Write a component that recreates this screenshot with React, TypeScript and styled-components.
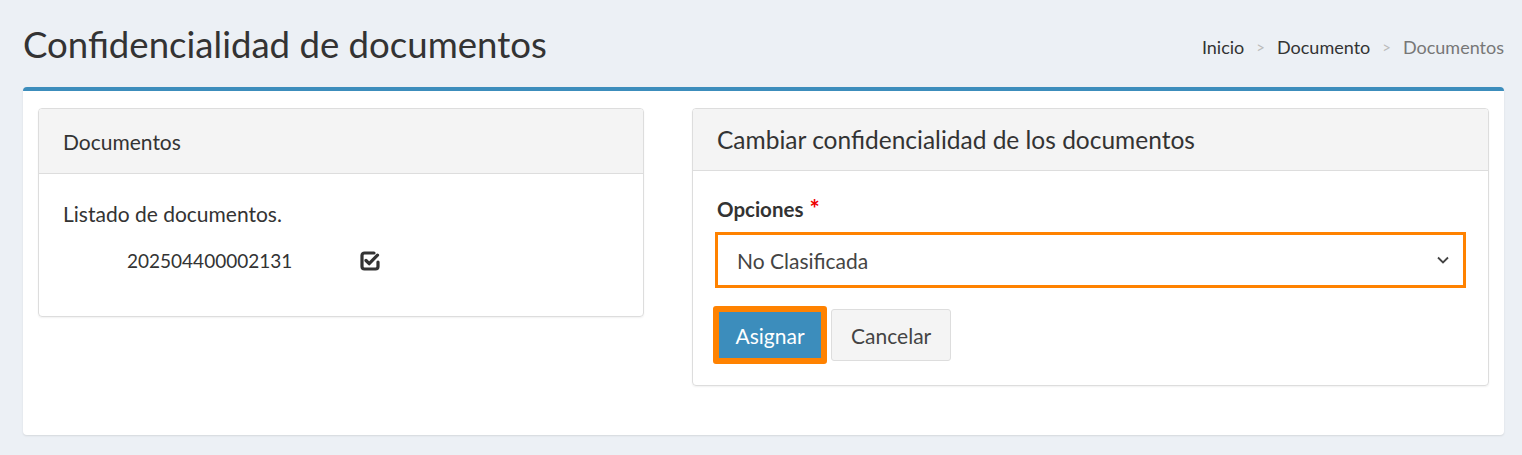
import styled, { createGlobalStyle } from "styled-components";

const GlobalStyle = createGlobalStyle`
  body {
    margin: 0;
    background: #ecf0f5;
    font-family: Lato, "Noto Sans", sans-serif;
    color: #333;
  }
`;

const Page = styled.div`
  padding: 0 18px 20px 23px;
`;

const Header = styled.div`
  height: 87px;
  display: flex;
  align-items: center;
  justify-content: space-between;
`;

const Title = styled.h1`
  margin: 0;
  font-size: 36.6px;
  font-weight: 400;
  color: #333;
`;

const Breadcrumb = styled.ol`
  display: flex;
  align-items: center;
  gap: 12px;
  margin: 6px 0 0;
  padding: 0;
  list-style: none;
  font-size: 18px;
`;

const Crumb = styled.li<{ $active?: boolean }>`
  color: ${(p) => (p.$active ? "#777" : "#333")};
`;

const Sep = styled.li`
  color: #bbb;
  font-size: 15px;
`;

const Box = styled.div`
  background: #fff;
  border-top: 4px solid #3c8dbc;
  border-radius: 4px;
  box-shadow: 0 1px 2px rgba(0, 0, 0, 0.1);
  padding: 17px 15px 49px;
  display: grid;
  grid-template-columns: 606px 1fr;
  gap: 48px;
  align-items: start;
`;

const Card = styled.div`
  border: 1px solid #ddd;
  border-radius: 4px;
  box-shadow: 0 1px 2px rgba(0, 0, 0, 0.06);
  overflow: hidden;
`;

const CardHeader = styled.div<{ $height: number; $size: number }>`
  height: ${(p) => p.$height}px;
  display: flex;
  align-items: center;
  padding: 0 24px;
  background: #f4f4f4;
  border-bottom: 1px solid #ddd;
  font-size: ${(p) => p.$size}px;
  color: #333;
`;

const CardBody = styled.div`
  padding: 26px 24px 27px;
`;

const Lead = styled.div`
  font-size: 21px;
  line-height: 28px;
`;

const DocRow = styled.div`
  display: flex;
  align-items: center;
  gap: 67px;
  padding: 21px 0 17px 64px;
  font-size: 19px;
`;

const FormBody = styled.div`
  padding: 26px 22px 21px;
`;

const Label = styled.label`
  display: flex;
  align-items: flex-start;
  font-size: 20.5px;
  font-weight: 700;
  margin-bottom: 11px;
  margin-left: 2px;
`;

const Req = styled.span`
  color: #e00;
  font-size: 24px;
  line-height: 24px;
  margin-left: 6px;
`;

const Select = styled.div`
  height: 50px;
  border: 3px solid #ff8200;
  display: flex;
  align-items: center;
  justify-content: space-between;
  padding: 0 14px 0 19px;
  font-size: 21px;
  color: #444;
`;

const Actions = styled.div`
  display: flex;
  align-items: center;
  gap: 4px;
  margin-top: 18px;
  margin-left: -2px;
`;

const Button = styled.button<{ $primary?: boolean }>`
  font-family: inherit;
  font-size: 21px;
  height: ${(p) => (p.$primary ? "58px" : "52px")};
  padding: 0 ${(p) => (p.$primary ? "16.5px" : "19px")};
  border-radius: 3px;
  cursor: pointer;
  color: ${(p) => (p.$primary ? "#fff" : "#444")};
  background: ${(p) => (p.$primary ? "#3c8dbc" : "#f4f4f4")};
  border: ${(p) => (p.$primary ? "6px solid #ff8200" : "1px solid #ddd")};
`;

const CheckIcon = () => (
  <svg width="22" height="22" viewBox="0 0 22 22">
    <path
      d="M15 3H5.5A2.5 2.5 0 0 0 3 5.5v11A2.5 2.5 0 0 0 5.5 19h11a2.5 2.5 0 0 0 2.5-2.5V12"
      fill="none"
      stroke="#333"
      strokeWidth="3.2"
      strokeLinecap="round"
    />
    <path
      d="M7 10.5l3.2 3.2 8.3-8.5"
      fill="none"
      stroke="#333"
      strokeWidth="3.2"
      strokeLinecap="round"
      strokeLinejoin="round"
    />
  </svg>
);

const Chevron = () => (
  <svg width="12" height="8" viewBox="0 0 12 8">
    <path d="M1 1.5l5 5 5-5" fill="none" stroke="#444" strokeWidth="1.8" />
  </svg>
);

export default function App() {
  return (
    <Page>
      <GlobalStyle />
      <Header>
        <Title>Confidencialidad de documentos</Title>
        <Breadcrumb>
          <Crumb>Inicio</Crumb>
          <Sep>&gt;</Sep>
          <Crumb>Documento</Crumb>
          <Sep>&gt;</Sep>
          <Crumb $active>Documentos</Crumb>
        </Breadcrumb>
      </Header>
      <Box>
        <Card>
          <CardHeader $height={64} $size={21}>
            Documentos
          </CardHeader>
          <CardBody>
            <Lead>Listado de documentos.</Lead>
            <DocRow>
              <span>202504400002131</span>
              <CheckIcon />
            </DocRow>
          </CardBody>
        </Card>
        <Card>
          <CardHeader $height={61} $size={24.5}>
            Cambiar confidencialidad de los documentos
          </CardHeader>
          <FormBody>
            <Label>
              Opciones<Req>*</Req>
            </Label>
            <Select>
              <span>No Clasificada</span>
              <Chevron />
            </Select>
            <Actions>
              <Button $primary>Asignar</Button>
              <Button>Cancelar</Button>
            </Actions>
          </FormBody>
        </Card>
      </Box>
    </Page>
  );
}
